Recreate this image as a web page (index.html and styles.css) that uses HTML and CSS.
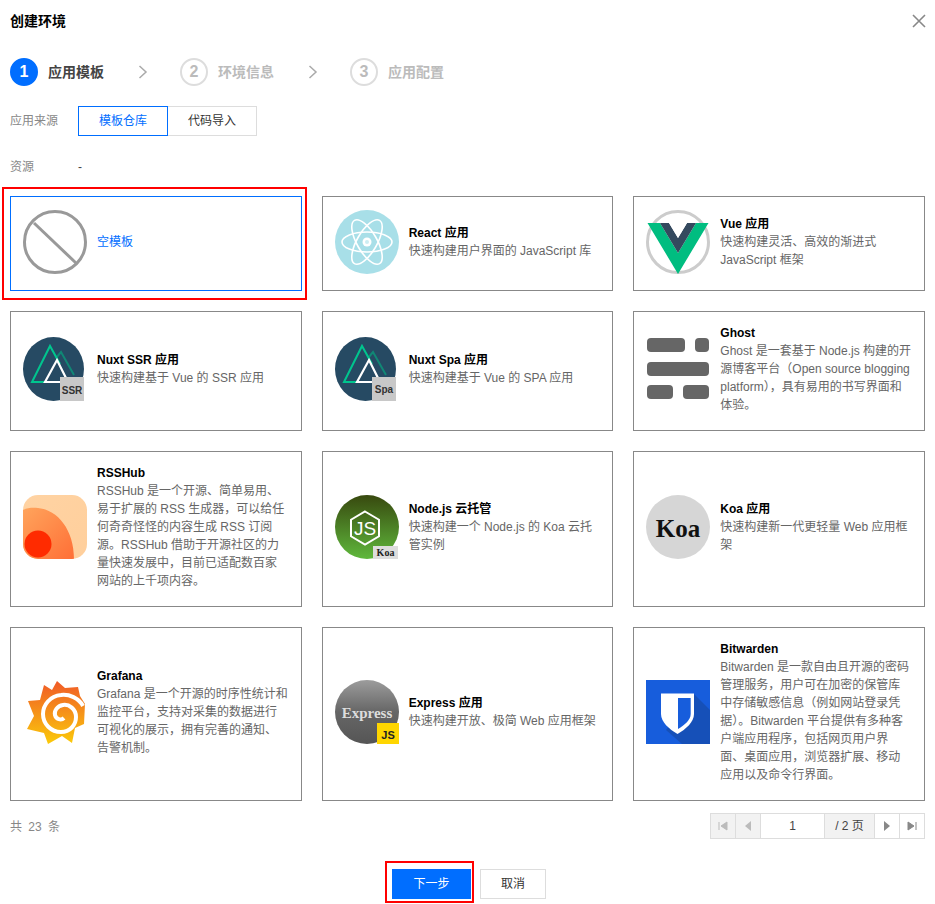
FILE: index.html
```html
<!DOCTYPE html>
<html lang="zh-CN">
<head>
    <meta charset="UTF-8">
    <meta name="viewport" content="width=device-width, initial-scale=1.0">
    <title>创建环境</title>
    <link rel="stylesheet" href="styles.css">
</head>
<body>
    <div class="dialog">
        <!-- 标题 -->
        <div class="dialog-head">
            <h3>创建环境</h3>
            <svg class="close" width="14" height="14" viewBox="0 0 14 14"><path d="M1 1l12 12M13 1L1 13" stroke="#888" stroke-width="1.6" fill="none"/></svg>
        </div>

        <!-- 步骤条 -->
        <div class="steps">
            <div class="step active"><span class="step-num">1</span><span class="step-name">应用模板</span></div>
            <svg class="step-arrow" width="10" height="14" viewBox="0 0 10 14"><path d="M1.5 1l6.5 6-6.5 6" stroke="#aaa" stroke-width="1.5" fill="none"/></svg>
            <div class="step"><span class="step-num">2</span><span class="step-name">环境信息</span></div>
            <svg class="step-arrow" width="10" height="14" viewBox="0 0 10 14"><path d="M1.5 1l6.5 6-6.5 6" stroke="#aaa" stroke-width="1.5" fill="none"/></svg>
            <div class="step"><span class="step-num">3</span><span class="step-name">应用配置</span></div>
        </div>

        <div class="form-row">
            <label>应用来源</label>
            <div class="tabs">
                <span class="tab selected">模板仓库</span>
                <span class="tab">代码导入</span>
            </div>
        </div>
        <div class="form-row source">
            <label>资源</label>
            <span class="value">-</span>
        </div>

        <!-- 模板列表 -->
        <div class="cards">
            <div class="card selected mark">
                <svg class="icon" viewBox="0 0 64 64"><circle cx="32" cy="32" r="30.5" fill="none" stroke="#999" stroke-width="3"/><path d="M11 13l42 40" stroke="#999" stroke-width="3"/></svg>
                <div class="card-text"><div class="card-title">空模板</div></div>
            </div>

            <div class="card">
                <svg class="icon" viewBox="0 0 64 64"><circle cx="32" cy="32" r="32" fill="#a8dfe8"/><g fill="none" stroke="#fff" stroke-width="1.6"><ellipse cx="32" cy="32" rx="25" ry="10"/><ellipse cx="32" cy="32" rx="25" ry="10" transform="rotate(60 32 32)"/><ellipse cx="32" cy="32" rx="25" ry="10" transform="rotate(120 32 32)"/></g><circle cx="32" cy="32" r="4.5" fill="#fff"/><circle cx="32" cy="32" r="2" fill="#cdeef3"/></svg>
                <div class="card-text">
                    <div class="card-title">React 应用</div>
                    <div class="card-desc">快速构建用户界面的 JavaScript 库</div>
                </div>
            </div>

            <div class="card">
                <svg class="icon" viewBox="0 0 64 64"><circle cx="32" cy="32" r="30.5" fill="none" stroke="#ccc" stroke-width="3"/><path d="M1.5 13H14l18 30 18-30h12.500L32 64z" fill="#00bd80"/><path d="M14 13h9l9 15 9-15h9L32 43z" fill="#34495e"/><path d="M23 13h18l-9 15z" fill="#fff"/></svg>
                <div class="card-text">
                    <div class="card-title">Vue 应用</div>
                    <div class="card-desc">快速构建灵活、高效的渐进式 JavaScript 框架</div>
                </div>
            </div>

            <div class="card">
                <svg class="icon" viewBox="0 0 64 64"><ellipse cx="30.5" cy="32" rx="30.5" ry="32" fill="#264a63"/><path d="M33 21l5-6 13 23" fill="none" stroke="#108775" stroke-width="2"/><path d="M23 45H9L27 9l10 18" fill="none" stroke="#00c58e" stroke-width="2"/><path d="M22 45l12-22 11 22z" fill="none" stroke="#fff" stroke-width="2.2"/><rect x="37" y="40" width="24" height="24" fill="#c8c8c8"/><text class="badge-text" x="49" y="57" text-anchor="middle">SSR</text></svg>
                <div class="card-text">
                    <div class="card-title">Nuxt SSR 应用</div>
                    <div class="card-desc">快速构建基于 Vue 的 SSR 应用</div>
                </div>
            </div>

            <div class="card">
                <svg class="icon" viewBox="0 0 64 64"><ellipse cx="30.5" cy="32" rx="30.5" ry="32" fill="#264a63"/><path d="M33 21l5-6 13 23" fill="none" stroke="#108775" stroke-width="2"/><path d="M23 45H9L27 9l10 18" fill="none" stroke="#00c58e" stroke-width="2"/><path d="M22 45l12-22 11 22z" fill="none" stroke="#fff" stroke-width="2.2"/><rect x="37" y="40" width="24" height="24" fill="#c8c8c8"/><text class="badge-text" x="49" y="56" text-anchor="middle">Spa</text></svg>
                <div class="card-text">
                    <div class="card-title">Nuxt Spa 应用</div>
                    <div class="card-desc">快速构建基于 Vue 的 SPA 应用</div>
                </div>
            </div>

            <div class="card">
                <svg class="icon" viewBox="0 0 64 64" fill="#666"><rect x="1" y="1" width="38" height="14" rx="4"/><rect x="49" y="1" width="14" height="14" rx="4"/><rect x="1" y="25" width="62" height="14" rx="4"/><rect x="1" y="48" width="26" height="14" rx="4"/><rect x="37" y="48" width="26" height="14" rx="4"/></svg>
                <div class="card-text">
                    <div class="card-title">Ghost</div>
                    <div class="card-desc">Ghost 是一套基于 Node.js 构建的开源博客平台（Open source blogging platform），具有易用的书写界面和体验。</div>
                </div>
            </div>

            <div class="card">
                <svg class="icon" viewBox="0 0 64 64">
                    <defs>
                        <linearGradient id="rssBack" x1="0" y1="0" x2="1" y2="1"><stop offset="0" stop-color="#ffd3a3"/><stop offset="1" stop-color="#ffcf9c"/></linearGradient>
                        <linearGradient id="rssMid" x1="0" y1="0" x2="1" y2="1"><stop offset="0" stop-color="#ffa45c"/><stop offset="1" stop-color="#ff6f36"/></linearGradient>
                        <clipPath id="rssClip"><rect width="64" height="64" rx="15"/></clipPath>
                    </defs>
                    <g clip-path="url(#rssClip)"><rect width="64" height="64" fill="url(#rssBack)"/><path d="M0 15C6 12 12 13 15 13c20 2 36 22 36 51H0z" fill="url(#rssMid)"/></g>
                    <circle cx="15" cy="49" r="13.5" fill="#ff2b00"/>
                </svg>
                <div class="card-text">
                    <div class="card-title">RSSHub</div>
                    <div class="card-desc">RSSHub 是一个开源、简单易用、易于扩展的 RSS 生成器，可以给任何奇奇怪怪的内容生成 RSS 订阅源。RSSHub 借助于开源社区的力量快速发展中，目前已适配数百家网站的上千项内容。</div>
                </div>
            </div>

            <div class="card">
                <svg class="icon" viewBox="0 0 64 64">
                    <defs><linearGradient id="nodeBg" x1="0" y1="0" x2="0" y2="1"><stop offset="0" stop-color="#38490f"/><stop offset="1" stop-color="#5fb83c"/></linearGradient></defs>
                    <circle cx="32" cy="32" r="32" fill="url(#nodeBg)"/>
                    <path d="M30 16.500l14 8.200v16.600L30 49.500l-14-8.200V24.700z" fill="none" stroke="#fff" stroke-width="2"/>
                    <text class="node-js" x="30" y="40" text-anchor="middle">JS</text>
                    <rect x="38" y="51" width="25" height="13" fill="#ddd"/>
                    <text class="koa-small" x="50.5" y="61" text-anchor="middle">Koa</text>
                </svg>
                <div class="card-text">
                    <div class="card-title">Node.js 云托管</div>
                    <div class="card-desc">快速构建一个 Node.js 的 Koa 云托管实例</div>
                </div>
            </div>

            <div class="card">
                <svg class="icon" viewBox="0 0 64 64"><circle cx="32" cy="32" r="32" fill="#d6d6d6"/><text class="koa-big" x="32" y="42" text-anchor="middle">Koa</text></svg>
                <div class="card-text">
                    <div class="card-title">Koa 应用</div>
                    <div class="card-desc">快速构建新一代更轻量 Web 应用框架</div>
                </div>
            </div>

            <div class="card">
                <svg class="icon" viewBox="0 0 64 64">
                    <defs><linearGradient id="grafanaBg" x1="0" y1="0" x2="0" y2="1"><stop offset="0" stop-color="#f05a28"/><stop offset="1" stop-color="#fbca0a"/></linearGradient></defs>
                    <path d="M34 1l8 7 13-1 2 9 5 8-1 20-9 4-3 15-10-7-14 8-4-11-17-4 7-13-6-15 12-1 4-15 8 5z" fill="url(#grafanaBg)"/>
                    <path d="M60 26C56 18 46 14 38 15 27 16 20 25 20 34c0 10 8 18 18 18 9 0 15-7 15-15 0-8-7-13-13-12-6 1-9 6-8 10 1 4 6 6 9 3" fill="none" stroke="#fff" stroke-width="4"/>
                </svg>
                <div class="card-text">
                    <div class="card-title">Grafana</div>
                    <div class="card-desc">Grafana 是一个开源的时序性统计和监控平台，支持对采集的数据进行可视化的展示，拥有完善的通知、告警机制。</div>
                </div>
            </div>

            <div class="card">
                <svg class="icon" viewBox="0 0 64 64">
                    <defs><linearGradient id="expressBg" x1="0" y1="0" x2="0" y2="1"><stop offset="0" stop-color="#9c9c9c"/><stop offset="0.5" stop-color="#666"/><stop offset="1" stop-color="#555"/></linearGradient></defs>
                    <circle cx="32" cy="32" r="32" fill="url(#expressBg)"/>
                    <text class="express" x="32" y="38" text-anchor="middle">Express</text>
                    <rect x="42" y="43" width="22" height="21" fill="#ffd600"/>
                    <text class="js-badge" x="53" y="59" text-anchor="middle">JS</text>
                </svg>
                <div class="card-text">
                    <div class="card-title">Express 应用</div>
                    <div class="card-desc">快速构建开放、极简 Web 应用框架</div>
                </div>
            </div>

            <div class="card">
                <svg class="icon" viewBox="0 0 64 64"><rect width="64" height="64" fill="#175ddc"/><path d="M48 14l16 16v34H36L20 50z" fill="#1650b8"/><path d="M15 13.500h33V34c0 8-8 15-16.500 20C23 49 15 42 15 34z" fill="#fff"/><path d="M32 18h12.700v16c0 6-6 11-12.700 15z" fill="#175ddc"/></svg>
                <div class="card-text">
                    <div class="card-title">Bitwarden</div>
                    <div class="card-desc">Bitwarden 是一款自由且开源的密码管理服务，用户可在加密的保管库中存储敏感信息（例如网站登录凭据）。Bitwarden 平台提供有多种客户端应用程序，包括网页用户界面、桌面应用，浏览器扩展、移动应用以及命令行界面。</div>
                </div>
            </div>
        </div>

        <!-- 分页 -->
        <div class="pager-row">
            <span class="total">共 23 条</span>
            <div class="pager">
                <span class="pager-btn off"><svg width="10" height="10" viewBox="0 0 10 10"><path d="M1 1v8M9 1v8L3 5z" stroke="#bbb" fill="#bbb"/></svg></span>
                <span class="pager-btn off"><svg width="10" height="10" viewBox="0 0 10 10"><path d="M8 0v10L2 5z" fill="#bbb"/></svg></span>
                <span class="pager-input">1</span>
                <span class="pager-count">/ 2 页</span>
                <span class="pager-btn"><svg width="10" height="10" viewBox="0 0 10 10"><path d="M2 0v10l6-5z" fill="#888"/></svg></span>
                <span class="pager-btn"><svg width="10" height="10" viewBox="0 0 10 10"><path d="M9 1v8M1 1v8l6-4z" stroke="#888" fill="#888"/></svg></span>
            </div>
        </div>

        <div class="dialog-foot">
            <button class="btn primary mark-btn">下一步</button>
            <button class="btn">取消</button>
        </div>
    </div>
</body>
</html>
```

FILE: styles.css
```css
* {
    box-sizing: border-box;
}
html, body {
    margin: 0;
    padding: 0;
    background: #fff;
}
body {
    font-family: "Liberation Sans", "Noto Sans CJK SC", sans-serif;
    font-size: 12px;
    line-height: 18px;
    color: #333;
    overflow: hidden;
}
.dialog {
    width: 935px;
    height: 904px;
    padding: 12px 10px 0;
}
.dialog-head {
    display: flex;
    justify-content: space-between;
    align-items: center;
    height: 18px;
}
.dialog-head h3 {
    margin: 0;
    font-size: 14px;
    font-weight: 700;
    color: #000;
}
.close {
    margin-right: -1px;
}

/* 步骤条 */
.steps {
    display: flex;
    align-items: center;
    height: 28px;
    margin-top: 28px;
}
.step {
    display: flex;
    align-items: center;
    gap: 10px;
    font-size: 14px;
    font-weight: 700;
    color: #bbb;
}
.step-num {
    width: 28px;
    height: 28px;
    display: flex;
    align-items: center;
    justify-content: center;
    border: 2px solid #ddd;
    border-radius: 50%;
    font-size: 16px;
}
.step.active {
    color: #444;
}
.step.active .step-num {
    background: #006eff;
    border-color: #006eff;
    color: #fff;
}
.step-arrow {
    margin: 0 32px 0 34px;
}

/* 表单 */
.form-row {
    display: flex;
    align-items: center;
    margin-top: 20px;
}
.form-row label {
    width: 68px;
    color: #888;
}
.form-row.source {
    margin-top: 22px;
}
.value {
    color: #444;
}
.tabs {
    display: flex;
}
.tab {
    width: 89px;
    height: 30px;
    display: flex;
    align-items: center;
    justify-content: center;
    border: 1px solid #ddd;
    border-left: none;
    color: #333;
}
.tab.selected {
    width: 90px;
    border: 1px solid #006eff;
    color: #006eff;
}

/* 模板卡片 */
.cards {
    display: grid;
    grid-template-columns: repeat(3, 1fr);
    gap: 20px;
    margin-top: 20px;
}
.card {
    position: relative;
    display: flex;
    align-items: center;
    gap: 10px;
    min-height: 95px;
    padding: 12px 12px 16px;
    border: 1px solid #888;
}
.card.selected {
    border-color: #006eff;
}
.card.selected .card-title {
    color: #006eff;
    font-weight: 400;
}
.card.mark::after {
    content: "";
    position: absolute;
    top: -10px;
    left: -9px;
    right: -6px;
    bottom: -10px;
    border: 2px solid #f00;
}
.icon {
    flex: none;
    width: 64px;
    height: 64px;
}
.card-text {
    flex: 1;
    min-width: 0;
}
.card-title {
    font-weight: 700;
    color: #000;
}
.card-desc {
    color: #666;
}

/* 图标文字 */
.badge-text {
    font: 700 10px "Liberation Sans", sans-serif;
    fill: #333;
}
.node-js {
    font: 400 19px "Liberation Sans", sans-serif;
    fill: #fff;
}
.koa-small {
    font: 700 10px "Liberation Serif", serif;
    fill: #222;
}
.koa-big {
    font: 700 25px "Liberation Serif", serif;
    fill: #111;
}
.express {
    font: 700 15px "Liberation Serif", serif;
    fill: #ddd;
}
.js-badge {
    font: 700 11px "Liberation Sans", sans-serif;
    fill: #222;
}

/* 分页 */
.pager-row {
    display: flex;
    justify-content: space-between;
    align-items: center;
    height: 26px;
    margin-top: 12px;
}
.total {
    color: #888;
    word-spacing: 3px;
    padding-top: 2px;
}
.pager {
    display: flex;
    height: 26px;
    border: 1px solid #ddd;
}
.pager-btn {
    width: 25px;
    display: flex;
    align-items: center;
    justify-content: center;
    border-left: 1px solid #ddd;
}
.pager-btn:first-child {
    width: 24px;
    border-left: none;
}
.pager-btn.off {
    background: #f2f2f2;
}
.pager-input {
    width: 64px;
    display: flex;
    align-items: center;
    justify-content: center;
    border-left: 1px solid #ddd;
    color: #444;
}
.pager-count {
    width: 50px;
    display: flex;
    align-items: center;
    justify-content: center;
    border-left: 1px solid #ddd;
    background: #f2f2f2;
    color: #444;
}

/* 底部按钮 */
.dialog-foot {
    display: flex;
    justify-content: center;
    gap: 9px;
    margin-top: 30px;
    padding-left: 3px;
}
.btn {
    height: 30px;
    width: 66px;
    padding: 0;
    font: inherit;
    color: #333;
    background: #fff;
    border: 1px solid #ddd;
}
.btn.primary {
    width: 79px;
    color: #fff;
    background: #006eff;
    border-color: #006eff;
}
.mark-btn {
    position: relative;
}
.mark-btn::after {
    content: "";
    position: absolute;
    top: -9px;
    left: -8px;
    right: -4px;
    bottom: -5px;
    border: 2px solid #f00;
}
```
